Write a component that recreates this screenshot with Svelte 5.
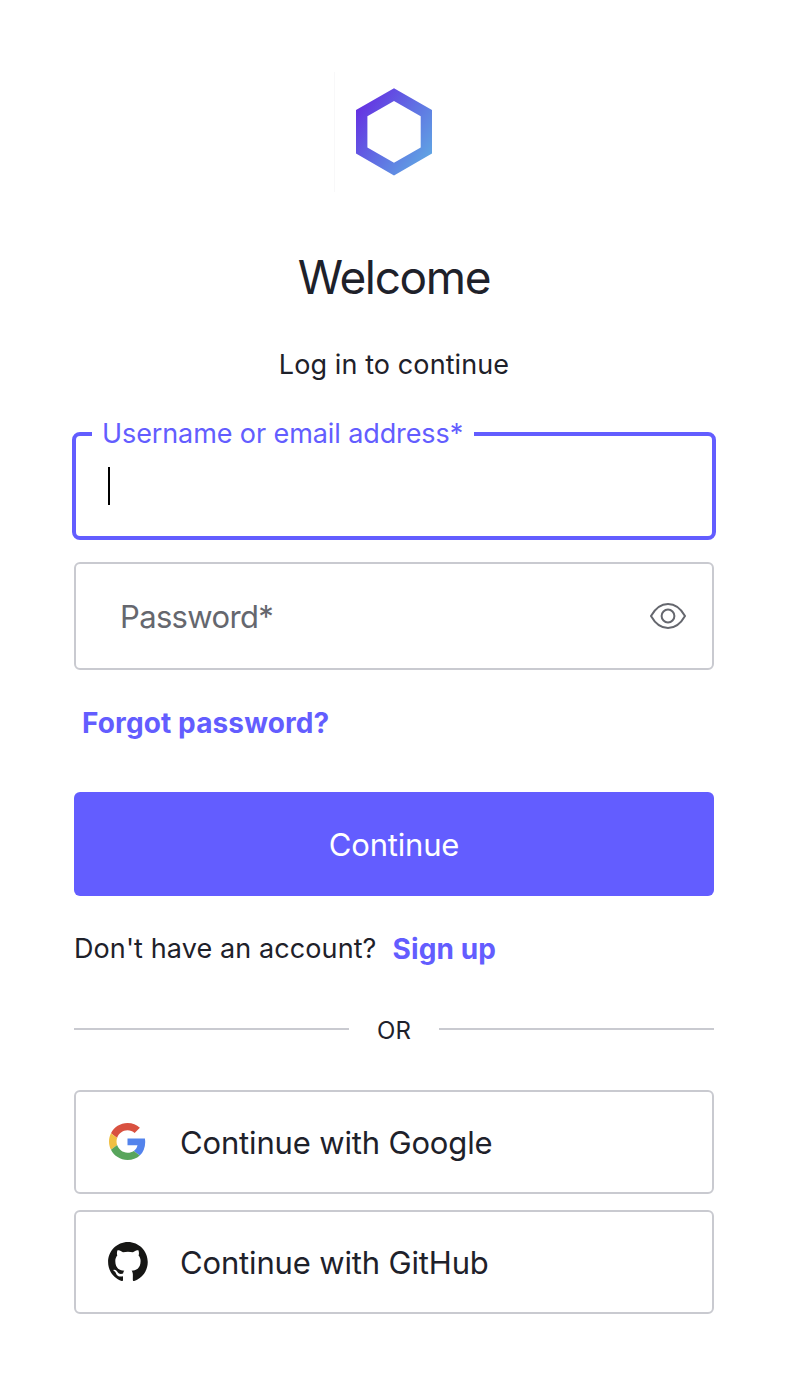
<script lang="ts">
	let username = '';
	let password = '';
	let showPassword = false;
</script>

<main class="card">
	<svg class="logo" viewBox="0 0 120 120" aria-hidden="true">
		<defs>
			<linearGradient id="hex" gradientUnits="userSpaceOnUse" x1="24" y1="36" x2="98" y2="88">
				<stop offset="0" stop-color="#6532e2" />
				<stop offset="0.5" stop-color="#6070e3" />
				<stop offset="1" stop-color="#60a8e3" />
			</linearGradient>
		</defs>
		<path d="M0.5 0V120" stroke="#f8f8f9" />
		<path
			fill="url(#hex)"
			fill-rule="evenodd"
			d="M60 16.3 98 38V81.6L60 103.5 22 81.6V38ZM60 29 33.4 44.2V75.5L60 90.7 86.7 75.5V44.2Z"
		/>
	</svg>

	<h1>Welcome</h1>
	<p class="subtitle">Log in to continue</p>

	<form on:submit|preventDefault>
		<div class="field focused">
			<label for="username"><span>Username or email address*</span></label>
			<span class="caret"></span>
			<input id="username" type="text" bind:value={username} />
		</div>
		<div class="field">
			<input
				type={showPassword ? 'text' : 'password'}
				aria-label="Password"
				bind:value={password}
				placeholder="Password*"
			/>
			<button
				type="button"
				class="eye"
				aria-label="Show password"
				on:click={() => (showPassword = !showPassword)}
			>
				<svg viewBox="0 0 36 26" fill="none" stroke="#65676e" stroke-width="2">
					<path d="M1 13C5.5 5 11 1 18 1S30.500 5 35 13C30.500 21 25 25 18 25S5.500 21 1 13Z" />
					<circle cx="18" cy="13" r="6.400" />
				</svg>
			</button>
		</div>
		<a class="link forgot" href="#forgot"><span>Forgot password?</span></a>
		<button class="submit" type="submit"><span>Continue</span></button>
	</form>

	<p class="signup"><span>Don't have an account?</span> <a class="link" href="#signup">Sign up</a></p>

	<div class="divider"><span>OR</span></div>

	<div class="providers">
		<button class="provider">
			<svg class="google" viewBox="0 0 48 48">
				<path fill="#d95140" d="M24 9.5c3.540 0 6.710 1.220 9.210 3.600l6.850-6.850C35.900 2.380 30.470 0 24 0 14.620 0 6.510 5.380 2.560 13.220l7.980 6.190C12.430 13.720 17.740 9.500 24 9.500z" />
				<path fill="#5383ec" d="M46.980 24.550c0-1.570-.15-3.090-.38-4.550H24v9.020h12.940c-.58 2.960-2.260 5.480-4.780 7.180l7.730 6c4.510-4.180 7.090-10.360 7.090-17.650z" />
				<path fill="#f1bf42" d="M10.530 28.590c-.48-1.450-.76-2.990-.76-4.590s.27-3.140.76-4.590l-7.980-6.190C.92 16.460 0 20.120 0 24c0 3.880.92 7.540 2.560 10.780l7.970-6.190z" />
				<path fill="#58a55c" d="M24 48c6.480 0 11.930-2.130 15.890-5.810l-7.730-6c-2.150 1.450-4.920 2.300-8.160 2.300-6.260 0-11.570-4.220-13.470-9.910l-7.980 6.190C6.510 42.620 14.620 48 24 48z" />
			</svg>
			<span>Continue with Google</span>
		</button>
		<button class="provider">
			<svg class="github" viewBox="0 0 98 96">
				<path fill="#161614" fill-rule="evenodd" d="M48.854 0C21.839 0 0 22 0 49.217c0 21.756 13.993 40.172 33.405 46.690 2.427.490 3.316-1.059 3.316-2.362 0-1.141-.080-5.052-.080-9.127-13.590 2.934-16.420-5.867-16.420-5.867-2.184-5.704-5.420-7.170-5.420-7.170-4.448-3.015.324-3.015.324-3.015 4.934.326 7.523 5.052 7.523 5.052 4.367 7.496 11.404 5.378 14.235 4.074.404-3.178 1.699-5.378 3.074-6.600-10.839-1.141-22.243-5.378-22.243-24.283 0-5.378 1.940-9.778 5.014-13.200-.485-1.222-2.184-6.275.486-13.038 0 0 4.125-1.304 13.426 5.052a46.970 46.970 0 0 1 12.214-1.630c4.125 0 8.330.571 12.213 1.630 9.302-6.356 13.427-5.052 13.427-5.052 2.670 6.763.970 11.816.485 13.038 3.155 3.422 5.015 7.822 5.015 13.200 0 18.905-11.404 23.060-22.324 24.283 1.780 1.548 3.316 4.481 3.316 9.126 0 6.600-.080 11.897-.080 13.526 0 1.304.890 2.853 3.316 2.364 19.412-6.520 33.405-24.935 33.405-46.691C97.707 22 75.788 0 48.854 0z" />
			</svg>
			<span>Continue with GitHub</span>
		</button>
	</div>
</main>

<style>
	:global(html) {
		overflow: hidden;
	}

	:global(body) {
		margin: 0;
		background: #fff;
	}

	.card {
		box-sizing: border-box;
		display: flex;
		flex-direction: column;
		width: 788px;
		height: 1390px;
		padding: 72px 74px 0;
		font-family: Inter, 'Liberation Sans', sans-serif;
		font-size: 28px;
		color: #1e212a;
		overflow: hidden;
	}

	.logo {
		width: 120px;
		height: 120px;
		align-self: center;
	}

	h1 {
		margin: 55px 0 0;
		font-size: 46px;
		font-weight: 400;
		line-height: 60px;
		letter-spacing: -1.35px;
		text-align: center;
	}

	p {
		margin: 0;
		line-height: 36px;
	}

	.subtitle {
		margin-top: 40px;
		font-size: 27px;
		letter-spacing: 0.1px;
		text-align: center;
	}

	form {
		display: flex;
		flex-direction: column;
		margin-top: 53px;
	}

	input,
	button {
		font: inherit;
		color: inherit;
	}

	.field {
		position: relative;
		box-sizing: border-box;
		display: flex;
		align-items: center;
		height: 108px;
		border: 2px solid #c9cad0;
		border-radius: 6px;
	}

	.field input {
		flex: 1;
		min-width: 0;
		padding: 0 0 0 44px;
		border: 0;
		outline: 0;
		background: transparent;
		font-size: 31px;
		letter-spacing: -0.65px;
	}

	.field input::placeholder {
		color: #65676e;
		opacity: 1;
	}

	.focused {
		margin: -4px -2px 22px;
		border: 4px solid #635dff;
		border-radius: 8px;
	}

	.focused label {
		position: absolute;
		top: -20px;
		left: 16px;
		width: 382px;
		box-sizing: border-box;
		padding-left: 10px;
		background: #fff;
		color: #635dff;
		font-size: 27px;
		line-height: 36px;
		letter-spacing: -0.1px;
		white-space: nowrap;
	}

	.caret {
		width: 2px;
		height: 38px;
		margin: 0 0 0 32px;
		background: #000;
	}

	.eye {
		display: flex;
		margin-right: 26px;
		padding: 0;
		border: 0;
		background: none;
	}

	.eye svg {
		width: 36px;
		height: 26px;
	}

	.link {
		color: #635dff;
		font-weight: 700;
		letter-spacing: 0.12px;
		text-decoration: none;
	}

	.forgot {
		margin: 35px 0 0 8px;
		line-height: 36px;
	}

	.submit {
		height: 104px;
		margin-top: 51px;
		padding: 0;
		border: 0;
		border-radius: 6px;
		background: #635dff;
		color: #fff;
		font-size: 31px;
		letter-spacing: -0.2px;
	}

	.signup {
		display: flex;
		gap: 16px;
		margin-top: 35px;
	}

	.signup span {
		font-size: 27px;
		letter-spacing: 0.1px;
	}

	.divider {
		display: flex;
		align-items: center;
		height: 30px;
		margin-top: 47px;
		font-size: 24px;
	}

	.divider::before,
	.divider::after {
		content: '';
		flex: 1;
		height: 2px;
		background: #c9cad0;
	}

	.divider span {
		width: 90px;
		padding-top: 3px;
		text-align: center;
	}

	.providers {
		display: flex;
		flex-direction: column;
		gap: 16px;
		margin-top: 46px;
	}

	.provider {
		display: flex;
		align-items: center;
		height: 104px;
		padding: 0 32px;
		border: 2px solid #c9cad0;
		border-radius: 6px;
		background: #fff;
		font-size: 31px;
		letter-spacing: -0.16px;
	}

	.google {
		width: 37px;
		height: 37px;
		margin: 0 34px 1px 1px;
	}

	.github {
		width: 40px;
		height: 39px;
		margin: 0 32px 2px 0;
	}
</style>
